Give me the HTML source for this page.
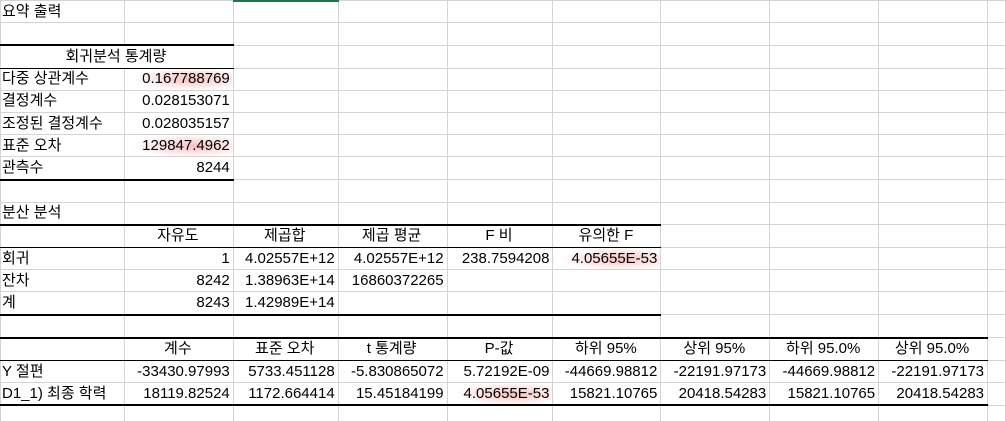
<!DOCTYPE html>
<html><head><meta charset="utf-8"><style>
html,body{margin:0;padding:0;background:#fff;width:1006px;height:421px;overflow:hidden;}
body{font-family:"Liberation Sans","Noto Sans CJK KR","NanumGothic",sans-serif;font-size:15px;color:#000;position:relative;}
table{border-collapse:collapse;table-layout:fixed;position:absolute;left:0;top:0;}
td{border:1px solid #d4d4d4;height:21.2px;padding:0 3px 0 1px;white-space:nowrap;overflow:visible;line-height:20px;}
td.r{text-align:right;}
td.c{text-align:center;}
td.tk{border-top:2px solid #000;}
td.bk{border-bottom:2px solid #000;}
td.bt{border-bottom:1px solid #000;}
.h{background:radial-gradient(ellipse 55% 55% at 62% 50%,rgba(240,130,130,.5),rgba(255,255,255,0) 100%);}
#g{position:absolute;left:233px;top:0;width:106px;height:2px;background:#217346;}
</style></head><body>
<table>
<colgroup><col style="width:124px"><col style="width:109px"><col style="width:105px"><col style="width:109px"><col style="width:106px"><col style="width:108px"><col style="width:109px"><col style="width:109px"><col style="width:109px"><col style="width:18px"></colgroup>
<tr><td>요약 출력</td><td></td><td></td><td></td><td></td><td></td><td></td><td></td><td></td><td></td></tr>
<tr><td></td><td></td><td></td><td></td><td></td><td></td><td></td><td></td><td></td><td></td></tr>
<tr><td colspan="2" class="c tk bt">회귀분석 통계량</td><td></td><td></td><td></td><td></td><td></td><td></td><td></td><td></td></tr>
<tr><td>다중 상관계수</td><td class="r h">0.167788769</td><td></td><td></td><td></td><td></td><td></td><td></td><td></td><td></td></tr>
<tr><td>결정계수</td><td class="r">0.028153071</td><td></td><td></td><td></td><td></td><td></td><td></td><td></td><td></td></tr>
<tr><td>조정된 결정계수</td><td class="r">0.028035157</td><td></td><td></td><td></td><td></td><td></td><td></td><td></td><td></td></tr>
<tr><td>표준 오차</td><td class="r h">129847.4962</td><td></td><td></td><td></td><td></td><td></td><td></td><td></td><td></td></tr>
<tr><td class="bk">관측수</td><td class="r bk">8244</td><td></td><td></td><td></td><td></td><td></td><td></td><td></td><td></td></tr>
<tr><td></td><td></td><td></td><td></td><td></td><td></td><td></td><td></td><td></td><td></td></tr>
<tr><td>분산 분석</td><td></td><td></td><td></td><td></td><td></td><td></td><td></td><td></td><td></td></tr>
<tr><td class="tk bt"></td><td class="c tk bt">자유도</td><td class="c tk bt">제곱합</td><td class="c tk bt">제곱 평균</td><td class="c tk bt">F 비</td><td class="c tk bt">유의한 F</td><td></td><td></td><td></td><td></td></tr>
<tr><td>회귀</td><td class="r">1</td><td class="r">4.02557E+12</td><td class="r">4.02557E+12</td><td class="r">238.7594208</td><td class="r h">4.05655E-53</td><td></td><td></td><td></td><td></td></tr>
<tr><td>잔차</td><td class="r">8242</td><td class="r">1.38963E+14</td><td class="r">16860372265</td><td></td><td></td><td></td><td></td><td></td><td></td></tr>
<tr><td class="bk">계</td><td class="r bk">8243</td><td class="r bk">1.42989E+14</td><td class="bk"></td><td class="bk"></td><td class="bk"></td><td></td><td></td><td></td><td></td></tr>
<tr><td></td><td></td><td></td><td></td><td></td><td></td><td></td><td></td><td></td><td></td></tr>
<tr><td class="tk bt"></td><td class="c tk bt">계수</td><td class="c tk bt">표준 오차</td><td class="c tk bt">t 통계량</td><td class="c tk bt">P-값</td><td class="c tk bt">하위 95%</td><td class="c tk bt">상위 95%</td><td class="c tk bt">하위 95.0%</td><td class="c tk bt">상위 95.0%</td><td></td></tr>
<tr><td>Y 절편</td><td class="r">-33430.97993</td><td class="r">5733.451128</td><td class="r">-5.830865072</td><td class="r">5.72192E-09</td><td class="r">-44669.98812</td><td class="r">-22191.97173</td><td class="r">-44669.98812</td><td class="r">-22191.97173</td><td></td></tr>
<tr><td class="bk">D1_1) 최종 학력</td><td class="r bk">18119.82524</td><td class="r bk">1172.664414</td><td class="r bk">15.45184199</td><td class="r bk h">4.05655E-53</td><td class="r bk">15821.10765</td><td class="r bk">20418.54283</td><td class="r bk">15821.10765</td><td class="r bk">20418.54283</td><td></td></tr>
<tr><td></td><td></td><td></td><td></td><td></td><td></td><td></td><td></td><td></td><td></td></tr>
</table>
<div id="g"></div>
</body></html>
